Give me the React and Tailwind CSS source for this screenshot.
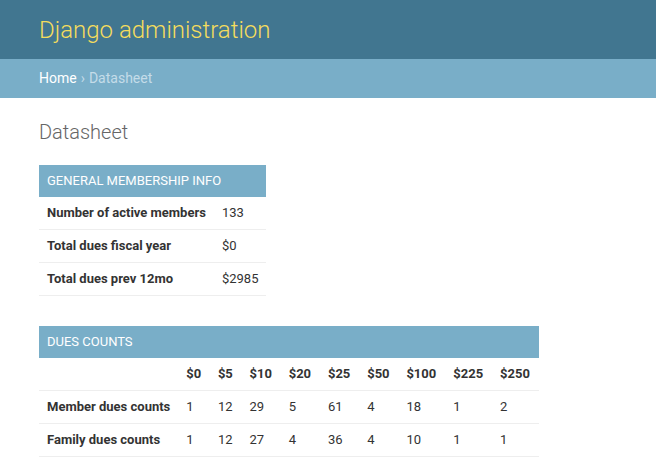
import React from 'react';

const prices = ['$0', '$5', '$10', '$20', '$25', '$50', '$100', '$225', '$250'];
const dues = [
    { label: 'Member dues counts', counts: [1, 12, 29, 5, 61, 4, 18, 1, 2] },
    { label: 'Family dues counts', counts: [1, 12, 27, 4, 36, 4, 10, 1, 1] },
];
const info = [
    ['Number of active members', '133'],
    ['Total dues fiscal year', '$0'],
    ['Total dues prev 12mo', '$2985'],
];

function Caption({ children }) {
    return (
        <caption className="bg-[#79aec8] text-white text-left text-[13px] leading-4 uppercase px-2 py-2">
            {children}
        </caption>
    );
}

export default function App() {
    return (
        <div className="min-h-[470px] bg-white font-['Roboto','Liberation_Sans',sans-serif] text-[13px] text-[#333]">
            {/* header */}
            <div className="h-[59px] bg-[#417690] flex items-center px-[39px]">
                <h1 className="text-[24px] font-light text-[#f5dd5d]">Django administration</h1>
            </div>
            {/* breadcrumbs */}
            <div className="h-[39px] bg-[#79aec8] flex items-center px-[39px] text-[14px] text-[#c4dce8]">
                <a className="text-white">Home</a>
                <span className="mx-1">&rsaquo;</span>
                <span>Datasheet</span>
            </div>

            <div className="px-[39px] pt-5">
                <h2 className="text-[20px] leading-[27px] font-light text-[#666] mt-px mb-[19px]">Datasheet</h2>

                <table className="border-collapse mb-[30px] w-[227px] whitespace-nowrap">
                    <Caption>General Membership Info</Caption>
                    <tbody>
                        {info.map(([k, v]) => (
                            <tr key={k} className="border-b border-[#eee]">
                                <th className="text-left font-bold px-2 py-2 leading-4 text-[#333]">{k}</th>
                                <td className="px-2 py-2 leading-4 text-[#333]">{v}</td>
                            </tr>
                        ))}
                    </tbody>
                </table>

                <table className="border-collapse w-[500px] whitespace-nowrap">
                    <Caption>Dues counts</Caption>
                    <tbody>
                        <tr className="border-b border-[#eee]">
                            <th className="px-2 py-2 leading-4 w-[139px]"></th>
                            {prices.map(p => (
                                <th key={p} className="text-left font-bold px-2 py-2 leading-4">{p}</th>
                            ))}
                        </tr>
                        {dues.map(row => (
                            <tr key={row.label} className="border-b border-[#eee]">
                                <th className="text-left font-bold px-2 py-2 leading-4">{row.label}</th>
                                {row.counts.map((c, i) => (
                                    <td key={i} className="px-2 py-2 leading-4">{c}</td>
                                ))}
                            </tr>
                        ))}
                    </tbody>
                </table>
            </div>
        </div>
    );
}
